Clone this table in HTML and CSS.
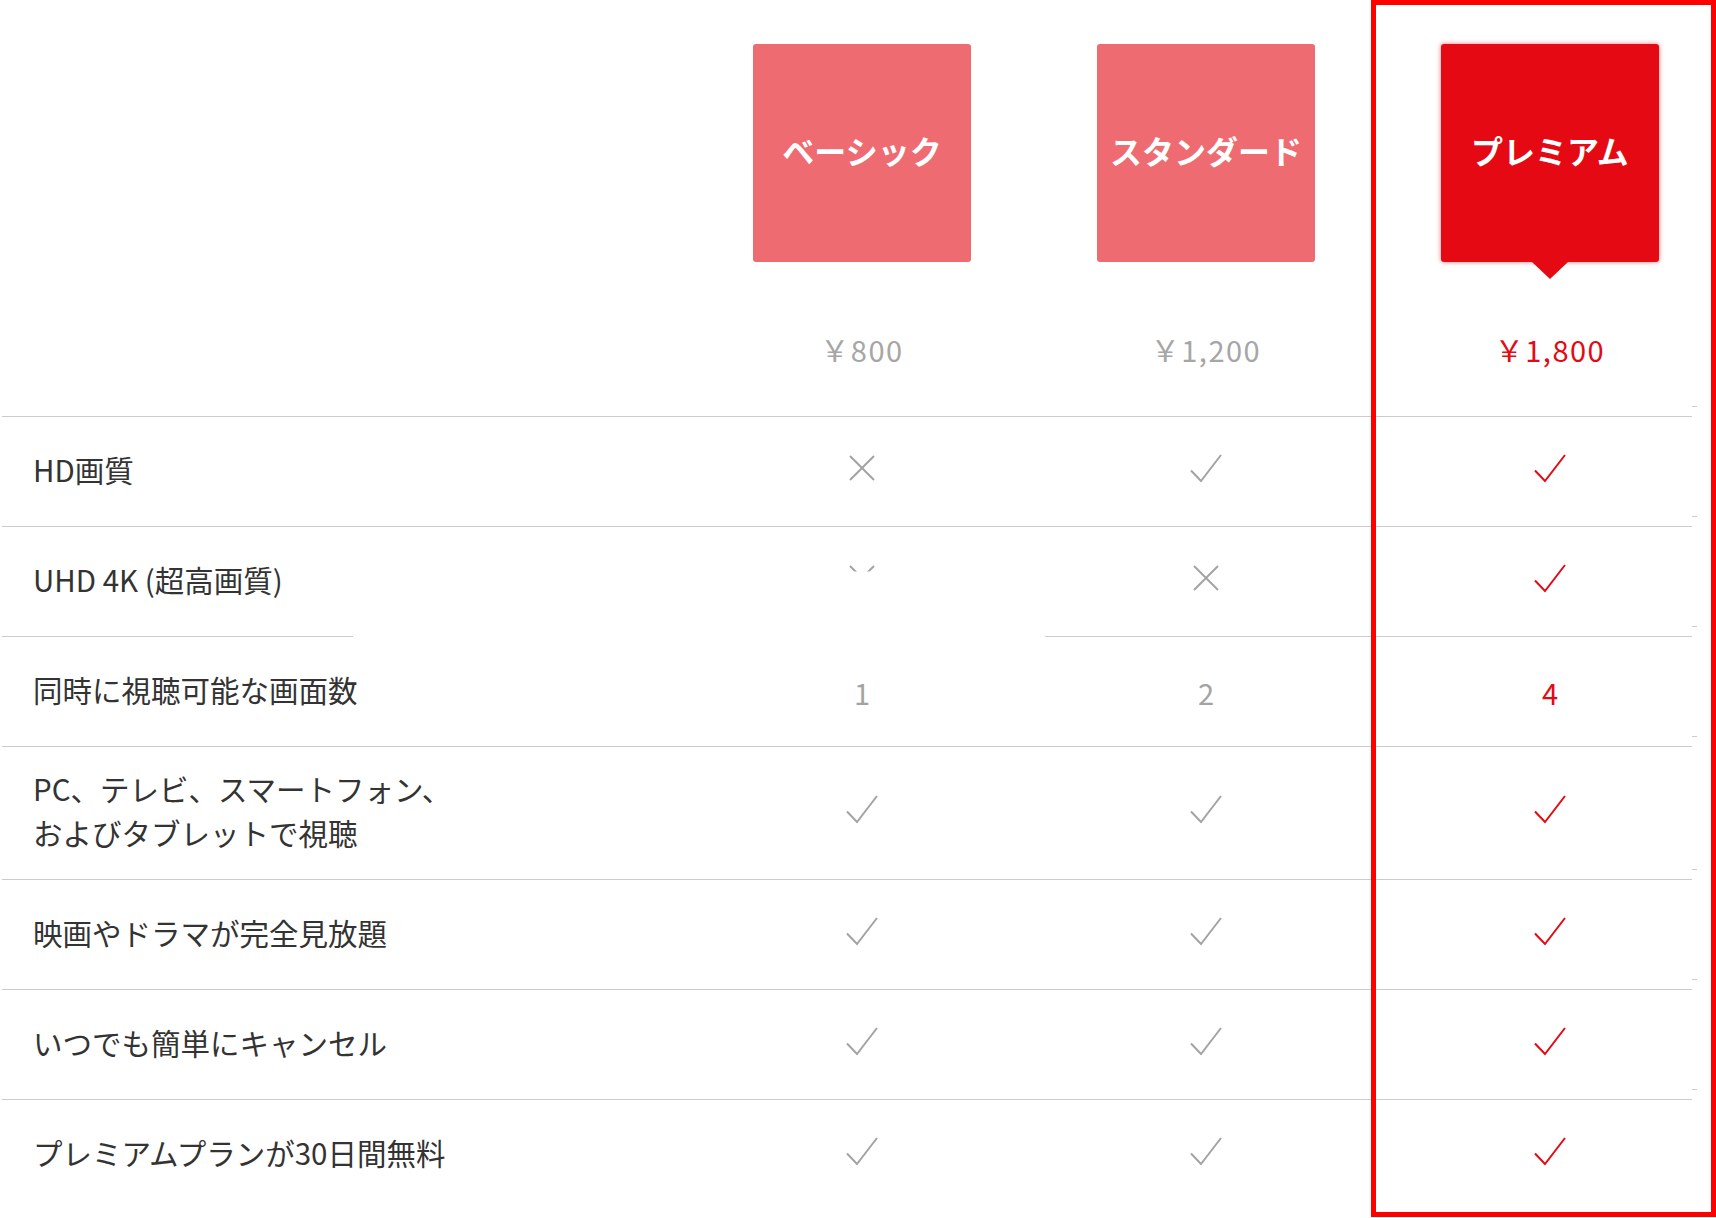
FILE: index.html
```html
<!DOCTYPE html>
<html lang="ja">
<head>
<meta charset="utf-8">
<title>プラン比較</title>
<link rel="stylesheet" href="styles.css">
</head>
<body>
<div class="page">
  <div class="table">
    <div class="head">
      <div class="head-label"></div>
      <div class="plan">
        <div class="plan-box">ベーシック</div>
        <div class="price">￥800</div>
      </div>
      <div class="plan">
        <div class="plan-box">スタンダード</div>
        <div class="price">￥1,200</div>
      </div>
      <div class="plan selected">
        <div class="plan-box">プレミアム</div>
        <div class="price">￥1,800</div>
      </div>
    </div>

    <div class="row">
      <div class="label">HD画質</div>
      <div class="val"><svg class="icon" width="32" height="30" viewBox="0 0 32 30"><path d="M4 2 L28 26 M28 2 L4 26"/></svg></div>
      <div class="val"><svg class="icon" width="32" height="30" viewBox="0 0 32 30"><path d="M1 16.5 L11 27 L31 1"/></svg></div>
      <div class="val on"><svg class="icon" width="32" height="30" viewBox="0 0 32 30"><path d="M1 16.5 L11 27 L31 1"/></svg></div>
    </div>

    <div class="row">
      <div class="label">UHD 4K (超高画質)</div>
      <div class="val"><svg class="icon clipped" width="32" height="30" viewBox="0 0 32 30"><path d="M4 2 L28 26 M28 2 L4 26"/></svg></div>
      <div class="val"><svg class="icon" width="32" height="30" viewBox="0 0 32 30"><path d="M4 2 L28 26 M28 2 L4 26"/></svg></div>
      <div class="val on"><svg class="icon" width="32" height="30" viewBox="0 0 32 30"><path d="M1 16.5 L11 27 L31 1"/></svg></div>
    </div>

    <div class="row split">
      <div class="label">同時に視聴可能な画面数</div>
      <div class="val">1</div>
      <div class="val">2</div>
      <div class="val on">4</div>
    </div>

    <div class="row">
      <div class="label">PC、テレビ、スマートフォン、<br>およびタブレットで視聴</div>
      <div class="val"><svg class="icon" width="32" height="30" viewBox="0 0 32 30"><path d="M1 16.5 L11 27 L31 1"/></svg></div>
      <div class="val"><svg class="icon" width="32" height="30" viewBox="0 0 32 30"><path d="M1 16.5 L11 27 L31 1"/></svg></div>
      <div class="val on"><svg class="icon" width="32" height="30" viewBox="0 0 32 30"><path d="M1 16.5 L11 27 L31 1"/></svg></div>
    </div>

    <div class="row">
      <div class="label">映画やドラマが完全見放題</div>
      <div class="val"><svg class="icon" width="32" height="30" viewBox="0 0 32 30"><path d="M1 16.5 L11 27 L31 1"/></svg></div>
      <div class="val"><svg class="icon" width="32" height="30" viewBox="0 0 32 30"><path d="M1 16.5 L11 27 L31 1"/></svg></div>
      <div class="val on"><svg class="icon" width="32" height="30" viewBox="0 0 32 30"><path d="M1 16.5 L11 27 L31 1"/></svg></div>
    </div>

    <div class="row">
      <div class="label">いつでも簡単にキャンセル</div>
      <div class="val"><svg class="icon" width="32" height="30" viewBox="0 0 32 30"><path d="M1 16.5 L11 27 L31 1"/></svg></div>
      <div class="val"><svg class="icon" width="32" height="30" viewBox="0 0 32 30"><path d="M1 16.5 L11 27 L31 1"/></svg></div>
      <div class="val on"><svg class="icon" width="32" height="30" viewBox="0 0 32 30"><path d="M1 16.5 L11 27 L31 1"/></svg></div>
    </div>

    <div class="row">
      <div class="label">プレミアムプランが30日間無料</div>
      <div class="val"><svg class="icon" width="32" height="30" viewBox="0 0 32 30"><path d="M1 16.5 L11 27 L31 1"/></svg></div>
      <div class="val"><svg class="icon" width="32" height="30" viewBox="0 0 32 30"><path d="M1 16.5 L11 27 L31 1"/></svg></div>
      <div class="val on"><svg class="icon" width="32" height="30" viewBox="0 0 32 30"><path d="M1 16.5 L11 27 L31 1"/></svg></div>
    </div>
  </div>
  <div class="highlight"></div>
</div>
</body>
</html>
```

FILE: styles.css
```css
html, body {
  margin: 0;
  padding: 0;
  background: #fff;
}

body {
  font-family: "Noto Sans CJK JP", "Noto Sans", sans-serif;
  color: #333;
}

.page {
  position: relative;
  width: 1716px;
  height: 1218px;
  overflow: hidden;
}

.table {
  margin-left: 2px;
  width: 1690px;
}

.head,
.row {
  display: grid;
  grid-template-columns: 658px 284px 284px 284px;
  column-gap: 60px;
}

.head {
  box-sizing: border-box;
  height: 416px;
  padding-top: 44px;
}

.plan {
  display: flex;
  flex-direction: column;
  align-items: center;
}

.plan-box {
  position: relative;
  width: 218px;
  height: 218px;
  border-radius: 3px;
  background: #ef6b72;
  color: #fff;
  font-size: 32px;
  font-weight: 700;
  display: flex;
  align-items: center;
  justify-content: center;
  padding-bottom: 6px;
  box-sizing: border-box;
}

.selected .plan-box {
  background: #e50914;
  box-shadow: 0 0 5px rgba(229, 9, 20, 0.55);
}

.selected .plan-box::after {
  content: "";
  position: absolute;
  top: 100%;
  left: 50%;
  margin-left: -18px;
  border-left: 18px solid transparent;
  border-right: 18px solid transparent;
  border-top: 17px solid #e50914;
}

.price {
  margin-top: 67px;
  line-height: 40px;
  font-size: 29px;
  letter-spacing: 1.5px;
  color: #a6a6a6;
}

.selected .price {
  color: #e50914;
}

.row {
  position: relative;
  box-sizing: border-box;
  min-height: 110px;
  padding: 19px 0;
  border-top: 1px solid #cccccc;
  align-items: center;
}

.row::after {
  content: "";
  position: absolute;
  right: -5px;
  top: -11px;
  width: 5px;
  height: 1px;
  background: #cccccc;
}

.row.split {
  border-top-color: transparent;
  background-image: linear-gradient(to right, #cccccc 0, #cccccc 351px, transparent 351px, transparent 1043px, #cccccc 1043px);
  background-origin: border-box;
  background-size: 100% 1px;
  background-repeat: no-repeat;
  background-position: 0 0;
}

.label {
  padding-left: 31px;
  padding-bottom: 6px;
  font-size: 29.5px;
  line-height: 44px;
  color: #333;
}

.val {
  display: flex;
  justify-content: center;
  align-items: center;
  font-size: 29px;
  line-height: 44px;
  color: #a3a3a3;
}

.val.on {
  color: #e50914;
}

.icon {
  display: block;
  margin-bottom: 6px;
  fill: none;
  stroke: #a3a3a3;
  stroke-width: 2;
}

.on .icon {
  stroke: #e50914;
}

.icon.clipped {
  clip-path: inset(0 0 22px 0);
}

.highlight {
  position: absolute;
  left: 1371px;
  top: 0;
  width: 345px;
  height: 1217px;
  box-sizing: border-box;
  border: 5px solid #ff0000;
  pointer-events: none;
}
```
